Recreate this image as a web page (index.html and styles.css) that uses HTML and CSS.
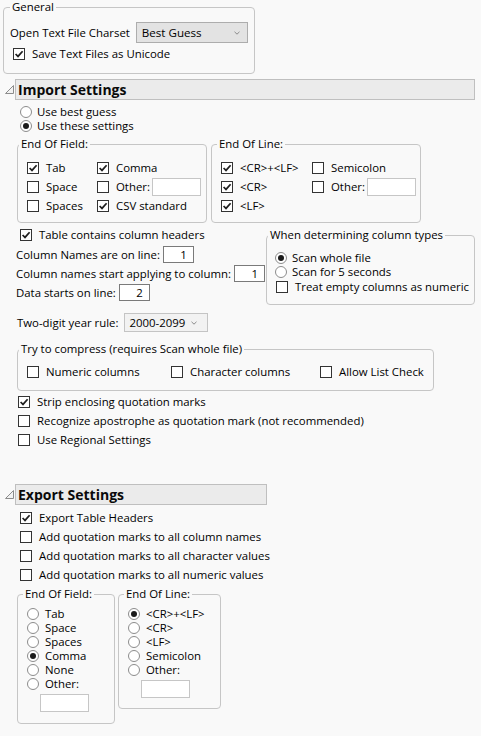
FILE: index.html
```html
<!DOCTYPE html>
<html lang="en">
<head>
<meta charset="utf-8">
<title>Text Data Files Preferences</title>
<link rel="stylesheet" href="styles.css">
</head>
<body>
<fieldset class="grp g-general">
  <legend>General</legend>
  <div class="gbody">
    <div class="charset-row">
      <span>Open Text File Charset</span>
      <div class="dd dd-charset"><span>Best Guess</span><svg class="chev" viewBox="0 0 6 4"><path d="M0.5 0.8 L3 3.2 L5.5 0.8" fill="none" stroke="#8a8a8a" stroke-width="1"/></svg></div>
    </div>
    <div class="opt unicode"><span class="cb"><svg viewBox="0 0 10 10"><path d="M1.6 5 L4 7.4 L8.6 2.2" fill="none" stroke="#1e1e1e" stroke-width="1.7"/></svg></span><span>Save Text Files as Unicode</span></div>
  </div>
</fieldset>

<div class="hdr">
  <svg class="tri" viewBox="0 0 9 9"><polygon points="0.5,8.5 8.5,0.5 8.5,8.5" fill="#f2f2f2" stroke="#8c8c8c" stroke-width="1"/></svg>
  <div class="bar bar-import">Import Settings</div>
</div>

<div class="imp-radios">
  <div class="opt"><span class="rb"></span><span>Use best guess</span></div>
  <div class="opt"><span class="rb on"></span><span>Use these settings</span></div>
</div>

<div class="eo-row">
  <fieldset class="grp g-eof">
    <legend>End Of Field:</legend>
    <div class="eo-grid eof-grid">
      <div class="cell"><span class="cb"><svg viewBox="0 0 10 10"><path d="M1.6 5 L4 7.4 L8.6 2.2" fill="none" stroke="#1e1e1e" stroke-width="1.7"/></svg></span><span>Tab</span></div>
      <div class="cell"><span class="cb"><svg viewBox="0 0 10 10"><path d="M1.6 5 L4 7.4 L8.6 2.2" fill="none" stroke="#1e1e1e" stroke-width="1.7"/></svg></span><span>Comma</span></div>
      <div class="cell"><span class="cb"></span><span>Space</span></div>
      <div class="cell"><span class="cb"></span><span>Other:</span><span class="tx tx-other"></span></div>
      <div class="cell"><span class="cb"></span><span>Spaces</span></div>
      <div class="cell"><span class="cb"><svg viewBox="0 0 10 10"><path d="M1.6 5 L4 7.4 L8.6 2.2" fill="none" stroke="#1e1e1e" stroke-width="1.7"/></svg></span><span>CSV standard</span></div>
    </div>
  </fieldset>
  <fieldset class="grp g-eol">
    <legend>End Of Line:</legend>
    <div class="eo-grid eol-grid">
      <div class="cell"><span class="cb"><svg viewBox="0 0 10 10"><path d="M1.6 5 L4 7.4 L8.6 2.2" fill="none" stroke="#1e1e1e" stroke-width="1.7"/></svg></span><span>&lt;CR&gt;+&lt;LF&gt;</span></div>
      <div class="cell"><span class="cb"></span><span>Semicolon</span></div>
      <div class="cell"><span class="cb"><svg viewBox="0 0 10 10"><path d="M1.6 5 L4 7.4 L8.6 2.2" fill="none" stroke="#1e1e1e" stroke-width="1.7"/></svg></span><span>&lt;CR&gt;</span></div>
      <div class="cell"><span class="cb"></span><span>Other:</span><span class="tx tx-other"></span></div>
      <div class="cell"><span class="cb"><svg viewBox="0 0 10 10"><path d="M1.6 5 L4 7.4 L8.6 2.2" fill="none" stroke="#1e1e1e" stroke-width="1.7"/></svg></span><span>&lt;LF&gt;</span></div>
      <div class="cell"></div>
    </div>
  </fieldset>
</div>

<div class="mid-row">
  <div class="mid-left">
    <div class="opt headers"><span class="cb"><svg viewBox="0 0 10 10"><path d="M1.6 5 L4 7.4 L8.6 2.2" fill="none" stroke="#1e1e1e" stroke-width="1.7"/></svg></span><span>Table contains column headers</span></div>
    <div class="frow frow-first"><span>Column Names are on line:</span><span class="num">1</span></div>
    <div class="frow"><span>Column names start applying to column:</span><span class="num">1</span></div>
    <div class="frow"><span>Data starts on line:</span><span class="num">2</span></div>
  </div>
  <fieldset class="grp g-types">
    <legend>When determining column types</legend>
    <div class="types-body">
      <div class="opt"><span class="rb on"></span><span>Scan whole file</span></div>
      <div class="opt"><span class="rb"></span><span>Scan for 5 seconds</span></div>
      <div class="opt treat"><span class="cb"></span><span>Treat empty columns as numeric</span></div>
    </div>
  </fieldset>
</div>

<div class="year-row">
  <span>Two-digit year rule:</span>
  <div class="dd dd-year"><span>2000-2099</span><svg class="chev" viewBox="0 0 6 4"><path d="M0.5 0.8 L3 3.2 L5.5 0.8" fill="none" stroke="#8a8a8a" stroke-width="1"/></svg></div>
</div>

<fieldset class="grp g-compress">
  <legend>Try to compress (requires Scan whole file)</legend>
  <div class="compress-grid">
    <div class="cell"><span class="cb"></span><span>Numeric columns</span></div>
    <div class="cell"><span class="cb"></span><span>Character columns</span></div>
    <div class="cell"><span class="cb"></span><span>Allow List Check</span></div>
  </div>
</fieldset>

<div class="misc">
  <div class="opt"><span class="cb"><svg viewBox="0 0 10 10"><path d="M1.6 5 L4 7.4 L8.6 2.2" fill="none" stroke="#1e1e1e" stroke-width="1.7"/></svg></span><span>Strip enclosing quotation marks</span></div>
  <div class="opt"><span class="cb"></span><span>Recognize apostrophe as quotation mark (not recommended)</span></div>
  <div class="opt"><span class="cb"></span><span>Use Regional Settings</span></div>
</div>

<div class="hdr hdr-export">
  <svg class="tri" viewBox="0 0 9 9"><polygon points="0.5,8.5 8.5,0.5 8.5,8.5" fill="#f2f2f2" stroke="#8c8c8c" stroke-width="1"/></svg>
  <div class="bar bar-export">Export Settings</div>
</div>

<div class="exp-opts">
  <div class="opt"><span class="cb"><svg viewBox="0 0 10 10"><path d="M1.6 5 L4 7.4 L8.6 2.2" fill="none" stroke="#1e1e1e" stroke-width="1.7"/></svg></span><span>Export Table Headers</span></div>
  <div class="opt"><span class="cb"></span><span>Add quotation marks to all column names</span></div>
  <div class="opt"><span class="cb"></span><span>Add quotation marks to all character values</span></div>
  <div class="opt"><span class="cb"></span><span>Add quotation marks to all numeric values</span></div>
</div>

<div class="exp-row">
  <fieldset class="grp g-xeof">
    <legend>End Of Field:</legend>
    <div class="x-body">
      <div class="opt"><span class="rb"></span><span>Tab</span></div>
      <div class="opt"><span class="rb"></span><span>Space</span></div>
      <div class="opt"><span class="rb"></span><span>Spaces</span></div>
      <div class="opt"><span class="rb on"></span><span>Comma</span></div>
      <div class="opt"><span class="rb"></span><span>None</span></div>
      <div class="opt"><span class="rb"></span><span>Other:</span></div>
      <span class="tx tx-exp"></span>
    </div>
  </fieldset>
  <fieldset class="grp g-xeol">
    <legend>End Of Line:</legend>
    <div class="x-body">
      <div class="opt"><span class="rb on"></span><span>&lt;CR&gt;+&lt;LF&gt;</span></div>
      <div class="opt"><span class="rb"></span><span>&lt;CR&gt;</span></div>
      <div class="opt"><span class="rb"></span><span>&lt;LF&gt;</span></div>
      <div class="opt"><span class="rb"></span><span>Semicolon</span></div>
      <div class="opt"><span class="rb"></span><span>Other:</span></div>
      <span class="tx tx-exp"></span>
    </div>
  </fieldset>
</div>
</body>
</html>
```

FILE: styles.css
```css
* { box-sizing: border-box; }
html, body { margin: 0; padding: 0; background: #f9f9f9; }
body {
  font-family: "Open Sans", "Noto Sans", sans-serif;
  font-size: 11.4px;
  line-height: 14px;
  color: #000;
  width: 481px;
  height: 736px;
  overflow: hidden;
}

/* group boxes */
.grp {
  margin: 0;
  padding: 0;
  border: 1px solid #c6c6c6;
  border-radius: 4px;
  min-inline-size: 0;
}
.grp > legend {
  padding: 0 2px;
  height: 14px;
  line-height: 14px;
  white-space: nowrap;
}

/* checkbox / radio */
.opt { display: flex; align-items: center; height: 14px; white-space: nowrap; }
.cell { display: flex; align-items: center; white-space: nowrap; }
.cb {
  width: 12px; height: 12px; flex: none;
  border: 1px solid #333;
  background: #fff;
  margin-right: 7px;
  display: flex; align-items: center; justify-content: center;
}
.cb svg { width: 10px; height: 10px; display: block; }
.rb {
  width: 12px; height: 12px; flex: none;
  border: 1px solid #8c8c8c;
  border-radius: 50%;
  background: #fff;
  margin-right: 5px;
  display: flex; align-items: center; justify-content: center;
}
.rb.on::after {
  content: "";
  width: 6px; height: 6px;
  border-radius: 50%;
  background: #1b1b1b;
}

/* text boxes */
.tx {
  display: block;
  width: 49px; height: 18px;
  background: #fff;
  border: 1px solid #c6c6c6;
  flex: none;
}
.num {
  display: block;
  width: 31px; height: 17px;
  background: #fff;
  border: 1px solid #7a7a7a;
  text-align: right;
  padding-right: 6px;
  line-height: 15px;
  flex: none;
}

/* dropdowns */
.dd {
  display: flex; align-items: center; justify-content: space-between;
  flex: none;
  border: 1px solid #adadad;
  white-space: nowrap;
}
.chev { width: 6px; height: 4px; display: block; }
.dd-charset {
  width: 112px; height: 21px;
  background: #e3e3e3;
  padding: 0 7px 0 5px;
  font-size: 11.6px;
}
.dd-year {
  width: 84px; height: 19px;
  background: #f2f2f2;
  border-color: #c4c4c4;
  padding: 0 10px 0 5px;
}

/* General */
.g-general { margin-left: 3px; width: 252px; }
.g-general > legend { margin-left: 6px; }
.gbody { padding: 8px 0 12px 6px; }
.charset-row { display: flex; align-items: center; height: 21px; gap: 6px; white-space: nowrap; }
.unicode { margin-top: 4px; padding-left: 3px; }

/* section headers */
.hdr { display: flex; align-items: center; margin-left: 5px; margin-top: 5px; }
.tri { width: 9px; height: 9px; margin-right: 1px; flex: none; display: block; }
.bar {
  height: 21px;
  background: #ebebeb;
  border: 1px solid #bfbfbf;
  padding-left: 2px;
  font-weight: 700;
  font-size: 14px;
  line-height: 19px;
  color: #0a0a0a;
}
.bar-import { width: 460px; }
.bar-export { width: 252px; }
.hdr-export { margin-top: 37px; }

/* import radios */
.imp-radios { margin: 5px 0 0 20px; }

/* End of field / line */
.eo-row { display: flex; align-items: flex-start; margin-top: 4px; }
.eo-grid { display: grid; grid-auto-rows: 19px; padding: 7px 0 7px 9px; }
.g-eof { margin-left: 17px; width: 190px; }
.g-eof > legend { margin-left: 1px; }
.eof-grid { grid-template-columns: 70px auto; }
.g-eol { margin-left: 4px; width: 210px; }
.g-eol > legend { margin-left: 5px; }
.eol-grid { grid-template-columns: 91px auto; }
.tx-other { margin-left: 2px; }

/* middle */
.mid-row {
  display: flex; justify-content: space-between; align-items: flex-start;
  margin: 5px 0 0 16px; width: 459px;
}
.headers { padding-left: 4px; }
.frow { display: flex; align-items: center; height: 19px; gap: 3px; white-space: nowrap; }
.frow-first { margin-top: 3px; }
.g-types { width: 209px; }
.g-types > legend { margin-left: 1px; }
.types-body { padding: 9px 0 10px 8px; }
.treat { margin-top: 1px; padding-left: 1px; }

.year-row {
  display: flex; align-items: center; height: 19px; gap: 5px;
  margin: 8px 0 0 17px; white-space: nowrap;
}

/* compress */
.g-compress { margin: 10px 0 0 17px; width: 417px; }
.g-compress > legend { margin-left: 1px; }
.compress-grid {
  display: grid; grid-template-columns: 144px 149px auto;
  height: 14px; padding: 9px 0 11px 9px; box-sizing: content-box;
}

.misc { margin: 4px 0 0 18px; }
.misc .opt + .opt { margin-top: 5px; }

/* export */
.exp-opts { margin: 6px 0 0 20px; }
.exp-opts .opt + .opt { margin-top: 5px; }
.exp-row { display: flex; align-items: flex-start; margin-top: 5px; }
.x-body { padding: 6px 0 11px 9px; }
.x-body .rb { margin-right: 6px; }
.tx-exp { margin: 3px 0 0 13px; }
.g-xeof { margin-left: 17px; width: 98px; }
.g-xeof > legend { margin-left: 5px; }
.g-xeol { margin-left: 3px; width: 103px; }
.g-xeol > legend { margin-left: 5px; }
.g-xeol .x-body { padding-bottom: 10px; }
```
